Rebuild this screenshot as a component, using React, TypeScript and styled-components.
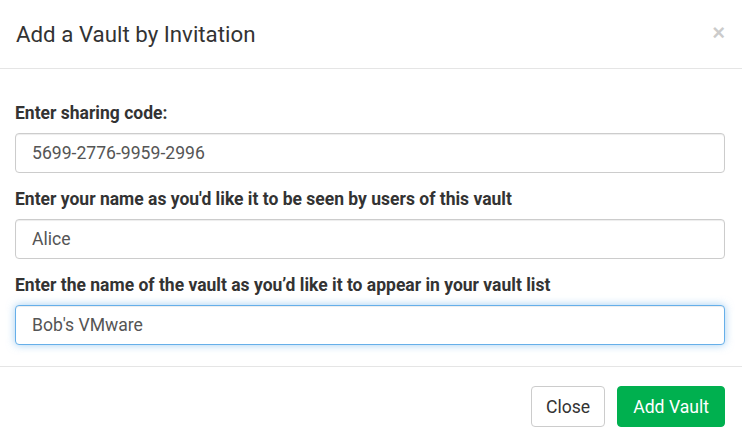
import React from "react";
import styled, { createGlobalStyle } from "styled-components";

const Global = createGlobalStyle`
  html, body { margin: 0; padding: 0; background: #fff; }
  body { font-family: Roboto, "Liberation Sans", Arial, sans-serif; color: #333; }
  * { box-sizing: border-box; }
`;

const Modal = styled.div`
  width: 742px;
  height: 444px;
  background: #fff;
  display: flex;
  flex-direction: column;
`;

const Header = styled.div`
  height: 69px;
  padding: 0 17px 0 15px;
  display: flex;
  align-items: center;
  justify-content: space-between;
  border-bottom: 1px solid #e5e5e5;
`;

const Title = styled.h4`
  margin: 0;
  font-size: 22.3px;
  font-weight: 400;
  color: #333;
  line-height: 1.2;
  padding-left: 1px;
`;

const CloseX = styled.button`
  border: 0;
  background: none;
  padding: 0;
  font-family: "Liberation Sans", Arial, sans-serif;
  font-size: 22px;
  font-weight: 700;
  line-height: 1;
  color: #000;
  opacity: 0.2;
  cursor: pointer;
  margin-top: -3px;
`;

const Body = styled.div`
  padding: 33px 17px 21px 15px;
  border-bottom: 1px solid #e5e5e5;
`;

const Group = styled.div`
  margin-bottom: 15px;
  &:last-child { margin-bottom: 0; }
`;

const Label = styled.label`
  display: block;
  font-size: 17.5px;
  font-weight: 700;
  line-height: 23px;
  margin-bottom: 8px;
  color: #333;
`;

const Input = styled.input<{ $focus?: boolean }>`
  display: block;
  width: 100%;
  height: 40px;
  padding: 0 14px 0 16px;
  font-family: Roboto, "Liberation Sans", Arial, sans-serif;
  font-size: 17.6px;
  color: #555;
  background: #fff;
  border: 1px solid ${(p) => (p.$focus ? "#66afe9" : "#ccc")};
  border-radius: 4px;
  outline: none;
  box-shadow: inset 0 1px 1px rgba(0, 0, 0, 0.075)
    ${(p) => (p.$focus ? ", 0 0 8px rgba(102, 175, 233, 0.6)" : "")};
`;

const Footer = styled.div`
  padding: 19px 17px 0 15px;
  display: flex;
  justify-content: flex-end;
  gap: 12px;
`;

const Button = styled.button<{ $primary?: boolean }>`
  height: 41px;
  padding: 0 ${(p) => (p.$primary ? "15px" : "14px")};
  font-family: Roboto, "Liberation Sans", Arial, sans-serif;
  font-size: 17.6px;
  border-radius: 4px;
  border: 1px solid ${(p) => (p.$primary ? "#00b04f" : "#ccc")};
  background: ${(p) => (p.$primary ? "#00b04f" : "#fff")};
  color: ${(p) => (p.$primary ? "#fff" : "#333")};
  cursor: pointer;
`;

export default function App() {
  return (
    <>
      <Global />
      <Modal>
        <Header>
          <Title>Add a Vault by Invitation</Title>
          <CloseX aria-label="Close">×</CloseX>
        </Header>
        <Body>
          <Group>
            <Label>Enter sharing code:</Label>
            <Input defaultValue="5699-2776-9959-2996" />
          </Group>
          <Group>
            <Label>Enter your name as you'd like it to be seen by users of this vault</Label>
            <Input defaultValue="Alice" />
          </Group>
          <Group>
            <Label>Enter the name of the vault as you’d like it to appear in your vault list</Label>
            <Input $focus defaultValue="Bob's VMware" />
          </Group>
        </Body>
        <Footer>
          <Button>Close</Button>
          <Button $primary>Add Vault</Button>
        </Footer>
      </Modal>
    </>
  );
}
